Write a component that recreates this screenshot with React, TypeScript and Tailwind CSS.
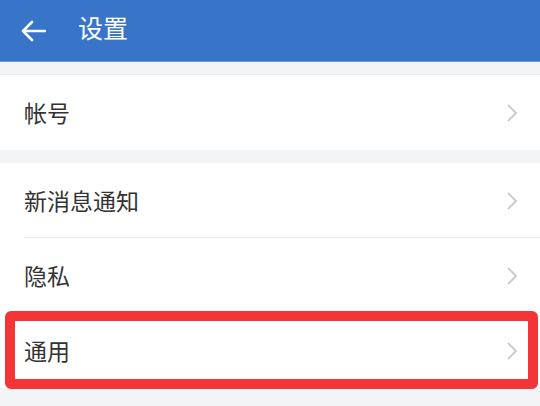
import React from "react";

const font = { fontFamily: '"Noto Sans CJK SC", "Noto Sans", sans-serif' };

function Chevron() {
  return (
    <svg width="12" height="20" viewBox="0 0 12 20" className="shrink-0">
      <path d="M2 2 L10 10 L2 18" fill="none" stroke="#c9c9c9" strokeWidth="1.8" />
    </svg>
  );
}

function Row({ label, divider }: { label: string; divider?: boolean }) {
  return (
    <div className="relative flex h-[75px] items-center justify-between bg-white pl-[24px] pr-[22px]">
      <span className="text-[23px] leading-none text-[#333333]">{label}</span>
      <Chevron />
      {divider && <div className="absolute bottom-0 left-[24px] right-0 h-px bg-[#ececec]" />}
    </div>
  );
}

export default function App() {
  return (
    <div className="relative h-[406px] w-[540px] overflow-hidden bg-[#f3f4f6]" style={font}>
      <div className="flex h-[62px] items-center border-b border-[#6c97d6] bg-[#3875c8] pl-[20px]">
        <svg width="26" height="22" viewBox="0 0 26 22">
          <path d="M12 2 L3 11 L12 20 M3 11 H25" fill="none" stroke="#ffffff" strokeWidth="2.6" strokeLinecap="round" strokeLinejoin="round" />
        </svg>
        <span className="mb-[6px] ml-[32px] text-[25px] leading-none text-white">设置</span>
      </div>
      <div className="mt-[12px] border-t border-[#e8e9eb]">
        <Row label="帐号" />
      </div>
      <div className="mt-[13px]">
        <Row label="新消息通知" divider />
        <Row label="隐私" />
        <Row label="通用" />
      </div>
      <div className="absolute left-[5px] top-[311px] h-[78px] w-[533px] rounded-[6px] border-[10px] border-[#f43537]" />
    </div>
  );
}
